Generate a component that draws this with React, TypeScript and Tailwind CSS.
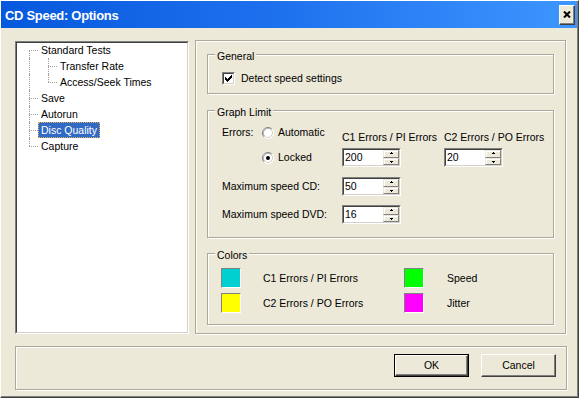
import React from "react";

const FONT = "font-['Liberation_Sans',Arial,sans-serif]";

function Group({ label, className, children }: { label: string; className?: string; children: React.ReactNode }) {
  return (
    <div className={`relative border border-[#aca899] shadow-[inset_1px_1px_0_#fff,1px_1px_0_#fff] ${className ?? ""}`}>
      <span className="absolute -top-[5px] left-[7px] px-[2px] bg-[#ece9d8] leading-[13px] text-[10.5px]">{label}</span>
      {children}
    </div>
  );
}

function Checkbox() {
  return (
    <div className="w-[13px] h-[13px] border border-t-[#808080] border-l-[#808080] border-r-white border-b-white">
      <div className="w-full h-full bg-white border border-t-[#404040] border-l-[#404040] border-r-[#d4d0c8] border-b-[#d4d0c8] flex items-center justify-center">
        <svg width="7" height="7" viewBox="0 0 7 7" shapeRendering="crispEdges">
          <path
            d="M6 0h1v1h-1z M5 1h2v1h-2z M0 2h1v1h-1z M4 2h3v1h-3z M0 3h2v1h-2z M3 3h3v1h-3z M0 4h5v1h-5z M1 5h3v1h-3z M2 6h1v1h-1z"
            fill="#000"
          />
        </svg>
      </div>
    </div>
  );
}

function Radio({ checked }: { checked?: boolean }) {
  return (
    <svg width="12" height="12" viewBox="0 0 12 12" className="shrink-0">
      <circle cx="6" cy="6" r="5.5" fill="#fff" />
      <path d="M2.11 9.89 A5.5 5.5 0 0 1 9.89 2.11" fill="none" stroke="#808080" strokeWidth="1" />
      <path d="M9.89 2.11 A5.5 5.5 0 0 1 2.11 9.89" fill="none" stroke="#ffffff" strokeWidth="1" />
      <path d="M2.82 9.18 A4.5 4.5 0 0 1 9.18 2.82" fill="none" stroke="#404040" strokeWidth="1" opacity="0.35" />
      <path d="M9.18 2.82 A4.5 4.5 0 0 1 2.82 9.18" fill="none" stroke="#d4d0c8" strokeWidth="1" />
      {checked && <circle cx="6" cy="6" r="2" fill="#000" />}
    </svg>
  );
}

function ArrowUp() {
  return (
    <svg width="5" height="3" viewBox="0 0 5 3" shapeRendering="crispEdges">
      <path d="M2 0h1v1h-1z M1 1h3v1h-3z" fill="#000" />
    </svg>
  );
}
function ArrowDown() {
  return (
    <svg width="5" height="3" viewBox="0 0 5 3" shapeRendering="crispEdges">
      <path d="M1 1h3v1h-3z M2 2h1v1h-1z" fill="#000" />
    </svg>
  );
}

function SpinBtn({ up }: { up?: boolean }) {
  return (
    <div className="flex-1 flex items-center justify-center bg-[#ece9d8] border border-t-[#ece9d8] border-l-[#ece9d8] border-r-[#808080] border-b-[#808080] shadow-[inset_1px_1px_0_#fff]">
      {up ? <ArrowUp /> : <ArrowDown />}
    </div>
  );
}

function Spinner({ value }: { value: string }) {
  return (
    <div className="w-[59px] h-[19px] border border-t-[#808080] border-l-[#808080] border-r-white border-b-white">
      <div className="w-full h-full flex bg-white border border-t-[#404040] border-l-[#404040] border-r-[#d4d0c8] border-b-[#d4d0c8]">
        <span className="flex-1 pl-[1px] leading-[15px] text-[10.5px]">{value}</span>
        <div className="w-[16px] flex flex-col">
          <SpinBtn up />
          <SpinBtn />
        </div>
      </div>
    </div>
  );
}

function Conn({ top, bottom }: { top?: boolean; bottom?: boolean }) {
  return (
    <div className="relative w-[9px] shrink-0">
      <div
        className={`absolute left-0 w-0 border-l border-dotted border-[#a0a0a0] ${top ? "top-0" : "top-[8px]"} ${
          bottom ? "bottom-0" : "bottom-[8px]"
        }`}
      />
      <div className="absolute left-0 right-0 top-[8px] h-0 border-t border-dotted border-[#a0a0a0]" />
    </div>
  );
}

function TreeLabel({ text, selected }: { text: string; selected?: boolean }) {
  return (
    <span
      className={`h-[16px] px-[2px] border leading-[14px] text-[10.5px] whitespace-nowrap ${
        selected ? "bg-[#316ac5] text-white border-dotted border-[#e2b258]" : "border-transparent"
      }`}
    >
      {text}
    </span>
  );
}

function RootRow({ text, top, bottom, selected }: { text: string; top?: boolean; bottom?: boolean; selected?: boolean }) {
  return (
    <div className="flex h-[16px] pl-[12px]">
      <Conn top={top} bottom={bottom} />
      <TreeLabel text={text} selected={selected} />
    </div>
  );
}

function ChildRow({ text, bottom }: { text: string; bottom?: boolean }) {
  return (
    <div className="flex h-[16px] pl-[12px]">
      <div className="relative w-[19px] shrink-0">
        <div className="absolute left-0 top-0 bottom-0 w-0 border-l border-dotted border-[#a0a0a0]" />
      </div>
      <Conn top bottom={bottom} />
      <TreeLabel text={text} />
    </div>
  );
}

function Swatch({ color }: { color: string }) {
  return (
    <div className="w-[20px] h-[20px] shrink-0 border border-t-[#808080] border-l-[#808080] border-r-white border-b-white">
      <div className="w-full h-full" style={{ backgroundColor: color }} />
    </div>
  );
}

function Button({ label, isDefault }: { label: string; isDefault?: boolean }) {
  const inner = (
    <div className="w-full h-full flex items-center justify-center bg-[#ece9d8] border border-t-white border-l-white border-r-[#404040] border-b-[#404040] shadow-[inset_-1px_-1px_0_#808080] text-[10.5px]">
      {label}
    </div>
  );
  return isDefault ? (
    <div className="w-[75px] h-[23px] border border-black">{inner}</div>
  ) : (
    <div className="w-[75px] h-[23px]">{inner}</div>
  );
}

export default function App() {
  return (
    <div
      className={`${FONT} w-[579px] h-[398px] bg-[#ece9d8] text-black flex flex-col border-l border-t border-l-white border-t-white border-r border-b border-r-[#404040] border-b-[#404040] shadow-[inset_-1px_-1px_0_#808080]`}
    >
      {/* Title bar */}
      <div className="h-[27px] mr-[1px] flex items-center justify-between pl-[4px] pr-[2px] bg-linear-to-r from-[#0658dd] via-[#1f72ee] to-[#3d96ff]">
        <span className="text-white font-bold text-[13px] tracking-[-0.3px] pt-[2px]">CD Speed: Options</span>
        <div className="w-[16px] h-[20px] bg-[#ece9d8] border border-t-white border-l-white border-r-[#404040] border-b-[#404040] shadow-[inset_-1px_-1px_0_#808080] flex items-center justify-center">
          <svg width="8" height="7" viewBox="0 0 8 7">
            <path d="M1 0.5 L7 6.5 M7 0.5 L1 6.5" stroke="#000" strokeWidth="2" />
          </svg>
        </div>
      </div>

      {/* Body */}
      <div className="flex-1 flex flex-col pl-[14px] pr-[11px] pt-[12px] pb-[6px]">
        <div className="flex gap-[6px]">
          {/* Tree */}
          <div className="mt-[1px] w-[174px] h-[293px] border border-t-[#808080] border-l-[#808080] border-r-white border-b-white">
            <div className="w-full h-full bg-white border border-t-[#404040] border-l-[#404040] border-r-[#d4d0c8] border-b-[#d4d0c8]">
              <div className="-mt-px">
                <RootRow text="Standard Tests" bottom />
                <ChildRow text="Transfer Rate" bottom />
                <ChildRow text="Access/Seek Times" />
                <RootRow text="Save" top bottom />
                <RootRow text="Autorun" top bottom />
                <RootRow text="Disc Quality" top bottom selected />
                <RootRow text="Capture" top />
              </div>
            </div>
          </div>

          {/* Right panel */}
          <div className="w-[371px] h-[294px] border border-[#aca899] shadow-[inset_1px_1px_0_#fff,1px_1px_0_#fff] px-[11px] pt-[13px] text-[10.5px]">
            <Group label="General" className="h-[40px]">
              <div className="flex items-center pl-[14px] pt-[17px]">
                <Checkbox />
                <span className="ml-[6px] leading-[13px]">Detect speed settings</span>
              </div>
            </Group>

            <Group label="Graph Limit" className="mt-[16px] h-[128px]">
              <div className="pl-[14px] pt-[15px]">
                <div className="flex">
                  <div className="w-[40px] leading-[13px]">Errors:</div>
                  <div className="w-[80px] flex flex-col gap-[12px]">
                    <div className="flex items-center h-[13px]">
                      <Radio />
                      <span className="ml-[4px] leading-[13px]">Automatic</span>
                    </div>
                    <div className="flex items-center h-[13px]">
                      <Radio checked />
                      <span className="ml-[4px] leading-[13px]">Locked</span>
                    </div>
                  </div>
                  <div className="w-[102px] flex flex-col pt-[5px]">
                    <span className="leading-[13px] whitespace-nowrap">C1 Errors / PI Errors</span>
                    <div className="mt-[4px]">
                      <Spinner value="200" />
                    </div>
                  </div>
                  <div className="flex flex-col pt-[5px]">
                    <span className="leading-[13px] whitespace-nowrap">C2 Errors / PO Errors</span>
                    <div className="mt-[4px]">
                      <Spinner value="20" />
                    </div>
                  </div>
                </div>
                <div className="flex items-center mt-[10px]">
                  <span className="w-[120px] leading-[13px]">Maximum speed CD:</span>
                  <Spinner value="50" />
                </div>
                <div className="flex items-center mt-[9px]">
                  <span className="w-[120px] leading-[13px]">Maximum speed DVD:</span>
                  <Spinner value="16" />
                </div>
              </div>
            </Group>

            <Group label="Colors" className="mt-[15px] h-[72px]">
              <div className="pl-[13px] pt-[14px] flex flex-col gap-[5px]">
                <div className="flex items-center">
                  <Swatch color="#00d0d0" />
                  <span className="ml-[22px] w-[141px] leading-[13px]">C1 Errors / PI Errors</span>
                  <Swatch color="#00ff00" />
                  <span className="ml-[23px] leading-[13px]">Speed</span>
                </div>
                <div className="flex items-center">
                  <Swatch color="#ffff00" />
                  <span className="ml-[22px] w-[141px] leading-[13px]">C2 Errors / PO Errors</span>
                  <Swatch color="#ff00ff" />
                  <span className="ml-[23px] leading-[13px]">Jitter</span>
                </div>
              </div>
            </Group>
          </div>
        </div>

        {/* Button bar */}
        <div className="mt-[12px] h-[44px] border border-[#aca899] shadow-[inset_1px_1px_0_#fff,1px_1px_0_#fff] flex justify-end items-start pt-[7px] pr-[10px] gap-[12px]">
          <Button label="OK" isDefault />
          <Button label="Cancel" />
        </div>
      </div>
    </div>
  );
}
